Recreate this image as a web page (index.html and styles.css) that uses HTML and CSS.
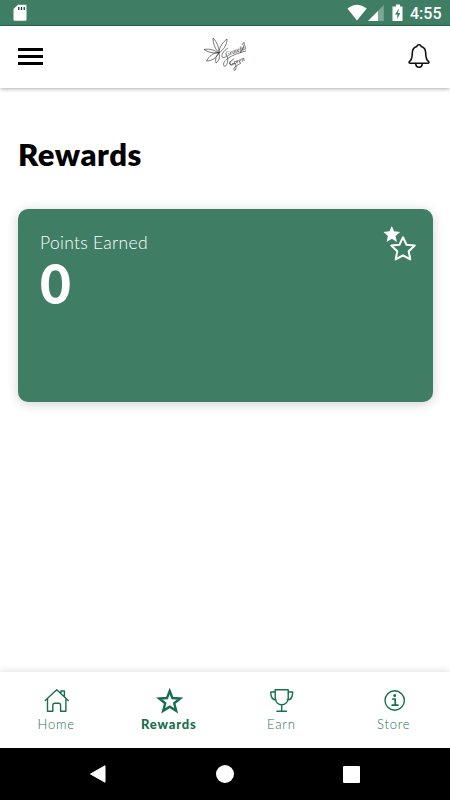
FILE: index.html
```html
<!DOCTYPE html>
<html lang="en">
<head>
<meta charset="utf-8">
<title>Rewards</title>
<link rel="stylesheet" href="styles.css">
</head>
<body>
<div class="screen">
  <div class="status">
    <svg width="14" height="18" viewBox="0 0 14 18"><path d="M5 .7h7.500q1 0 1 1v14q0 1-1 1h-11q-1 0-1-1V5z" fill="#fff"/><path d="M5.800 3v3M8.500 3v3M11.200 3v3" stroke="#173f30" stroke-width="1.300"/></svg>
    <div class="status-right">
      <svg width="56" height="18" viewBox="0 0 56 18"><path d="M.4 4.600Q10-3 19.700 4.600L10 16.600z" fill="#fff" /><path d="M36.800 1v16H21z" fill="#7ba894"/><path d="M31 7v10H21z" fill="#fff"/><path d="M49 .5h4v2h2.500V17H45.500V2.500H49z" fill="#fff"/><path d="M52 4.500l-4 6h2.300v4.500l3-6H51z" fill="#3f7e65"/></svg>
      <span class="clock">4:55</span>
    </div>
  </div>
  <header class="header">
    <div class="menu"><i></i><i></i><i></i></div>
    <svg class="logo" width="46" height="36" viewBox="0 0 46 36">
      <g fill="none" stroke="#333" stroke-width=".65">
        <path d="M16 17C12 13 10 7 10 2c4 4 6 9 6 15zM16 17c0-6 4-11 8-14 0 6-3 10-8 14zM15 17C9 17 4 16 1 13.500c6-1 11 .5 14 3.500zM16 16.500c-6 0-10 4-12.500 8.500 5 0 10-3 12.500-8.500zM16 17c-3 3-4 6-3 10 3-2 4-5 3-10z"/>
        <path d="M25 12c-8 5-8 13-1 8 2 3 0 12-3 10-2-3 2-10 22-15M31 23c-7 3-5 8 1 4 2 3 1 9-1 7-1-3 4-5 7-7M39 9c3-6 4-1-2 8"/>
      </g>
      <text x="23" y="20.500" class="logo-type" transform="rotate(-20 23 20.500)">Grateful</text>
      <text x="27" y="30" class="logo-type" transform="rotate(-20 27 30)">Green</text>
    </svg>
    <svg class="bell" width="24" height="26" viewBox="0 0 24 26" fill="none" stroke="#111" stroke-width="1.600" stroke-linejoin="round"><path d="M12 1.800c-1.400 0-2 .7-2.200 1.700C6.500 4.500 5.300 7 5.300 10c0 5-.5 7-3 8.700-.5 1 0 1.500.7 1.500h18c.7 0 1.200-.5.7-1.500-2.500-1.700-3-3.700-3-8.700 0-3-1.200-5.500-4.500-6.500-.2-1-.8-1.700-2.200-1.700zM8.700 20.500c.3 5 6.300 5 6.600 0"/></svg>
  </header>
  <main class="content">
    <h1>Rewards</h1>
    <section class="card">
      <div>
        <div class="label">Points Earned</div>
        <div class="points">0</div>
      </div>
      <svg class="stars" width="34" height="38" viewBox="0 0 34 38"><path d="M8.800 1l2.300 5.300 6 .6-4.500 4 1.300 6-5.100-3.100-5.200 3.100 1.300-6L.6 6.900l5.900-.6z" fill="#fff"/><path d="M20 12.300l3.500 7.400 8.200.9-6 5.600 1.600 8.200-7.300-4.100-7.300 4.100 1.600-8.200-6-5.600 8.200-.9z" fill="#3f7e65" stroke="#fff" stroke-width="2" stroke-linejoin="round"/></svg>
    </section>
  </main>
  <nav class="tabs">
    <div class="tab home"><svg width="28" height="28" viewBox="0 0 28 28"><path d="M2.500 13.500L14 2.800l11.500 10.700M4.800 12v12.300h5.300v-6q0-2 2-2h3.800q2 0 2 2v6h5.300V12M18.300 6V4h3.400v5.500"/></svg><span>Home</span></div>
    <div class="tab active"><svg width="28" height="28" viewBox="0 0 28 28"><path d="M14 4l2.700 7 7.800.500-6 4.800 2 7.500-6.500-4.100-6.500 4.100 2-7.500-6-4.800 7.800-.5z"/></svg><span>Rewards</span></div>
    <div class="tab earn"><svg width="28" height="28" viewBox="0 0 28 28"><path d="M7.500 2.800h13V11c0 9-13 9-13 0zM7.500 5H3c0 5 1.500 8 5.500 8M20.500 5H25c0 5-1.500 8-5.500 8M14 17.800v6.500M9.200 24.300h9.600"/></svg><span>Earn</span></div>
    <div class="tab store"><svg width="28" height="28" viewBox="0 0 28 28"><circle cx="14" cy="13.500" r="9.700"/><path d="M12 12h2.500v6M11.500 18.200h5.700" stroke-width="1.700"/><circle cx="14" cy="8.500" r=".8"/></svg><span>Store</span></div>
  </nav>
  <div class="system">
    <svg width="18" height="20" viewBox="0 0 18 20"><path d="M16 1.800v16.400L1.500 10z" fill="#fff" stroke="#fff" stroke-linejoin="round"/></svg>
    <div class="circle"></div>
    <div class="square"></div>
  </div>
</div>
</body>
</html>
```
FILE: styles.css
```css
* { box-sizing: border-box; }
body { margin: 0; background: #fff; font-family: Lato, sans-serif; }
svg { display: block; flex: none; }
.screen { width: 450px; height: 800px; display: flex; flex-direction: column; overflow: hidden; }
.status { height: 26px; background: #3f7e65; border-bottom: 1px solid #207052; display: flex; justify-content: space-between; padding: 4px 8px 0 13px; flex: none; }
.status-right { display: flex; gap: 7px; }
.clock { font: 500 16px/20px Roboto, sans-serif; color: #fff; width: 32px; white-space: nowrap; }
.header { height: 62px; flex: none; display: flex; justify-content: space-between; align-items: center; padding: 0 19px 0 18px; box-shadow: 0 1px 4px rgba(0,0,0,.32); }
.menu { width: 25px; display: grid; gap: 4px; margin-top: -1px; }
.menu i { height: 3px; background: #000; }
.logo { margin: -7px 0 0 1px; }
.logo-type { font: italic 6.500px "Liberation Serif", serif; fill: #111; }
.bell { margin-top: -2px; }
.content { flex: 1; padding: 48px 17px 0 18px; }
h1 { margin: 0; height: 73px; font-size: 31px; line-height: 36px; font-weight: 800; letter-spacing: .55px; }
.card { height: 193px; background: #3f7e65; border-radius: 10px; box-shadow: 0 2px 12px rgba(0,0,0,.18); color: #fff; padding: 23px 16px 0 22px; display: flex; justify-content: space-between; }
.label { font-size: 17.500px; line-height: 22px; font-weight: 300; letter-spacing: .3px; }
.points { font-size: 56px; line-height: 60px; font-weight: 900; transform: scaleX(.95); transform-origin: left; margin-top: -1px; }
.stars { margin-top: -7px; }
.tabs { height: 76px; flex: none; display: grid; grid-template-columns: repeat(4, 1fr); padding-top: 15px; box-shadow: 0 -1px 7px rgba(0,0,0,.13); }
.tab { display: flex; flex-direction: column; align-items: center; color: #267354; font-size: 13px; line-height: 16px; letter-spacing: .8px; font-weight: 300; }
.tab svg { fill: none; stroke: #16704c; stroke-width: 1.400; stroke-linejoin: round; stroke-linecap: round; transform: translateX(.7px); }
.tab span { margin-top: 1px; }
.active { font-weight: 900; color: #16704c; }
.active svg { stroke-width: 2.400; stroke-linejoin: miter; }
.system { height: 52px; flex: none; background: #000; display: flex; justify-content: space-between; align-items: center; padding: 0 90px 0 89px; }
.circle { width: 18px; height: 18px; border-radius: 50%; background: #fff; }
.square { width: 17px; height: 17px; border-radius: 1px; background: #fff; }
```
